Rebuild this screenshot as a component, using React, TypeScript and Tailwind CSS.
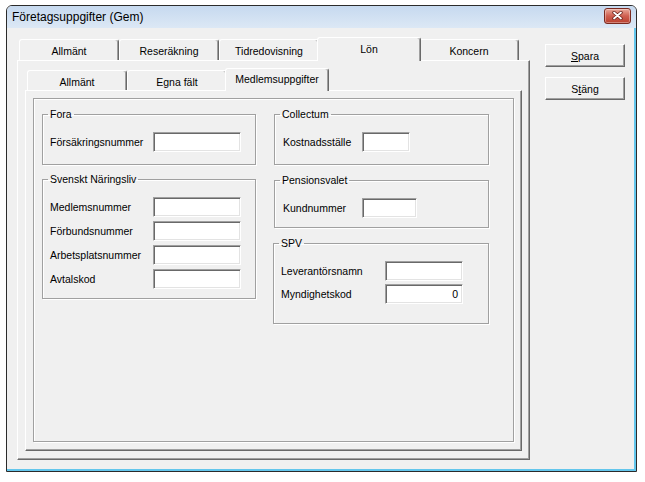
import clsx from "clsx"

function CloseButton() {
  return (
    <div className="mb-[3px] flex h-[16px] w-[27px] items-center justify-center rounded-[3px] border border-[#7a2a20] bg-linear-to-b from-[#e8a99b] via-[#cf5f50] to-[#b9402f] shadow-[inset_0_0_0_1px_rgba(255,255,255,0.35)]">
      <svg width="11" height="9" viewBox="0 0 11 9">
        <path d="M2 1.5 L9 7.5 M9 1.5 L2 7.5" stroke="#6b231a" strokeWidth="3.4" strokeLinecap="round" />
        <path d="M2 1.5 L9 7.5 M9 1.5 L2 7.5" stroke="#ffffff" strokeWidth="1.8" strokeLinecap="round" />
      </svg>
    </div>
  )
}

function Tab({ label, selected, small }: { label: string; selected?: boolean; small?: boolean }) {
  if (selected) {
    return (
      <div
        className={clsx(
          "relative z-10 -mx-[2px] -mb-[1px] flex w-[104px] items-center justify-center rounded-t-[3px] border border-b-0 border-t-white border-l-white border-r-[#696969] bg-[#f0f0f0] pb-[2px] shadow-[inset_-1px_0_0_#a0a0a0]",
          small ? "h-[23px]" : "h-[24px]"
        )}
      >
        {label}
      </div>
    )
  }
  return (
    <div
      className={clsx(
        "flex w-[100px] items-center justify-center rounded-t-[3px] border border-b-0 border-t-white border-l-white border-r-[#696969] bg-[#f0f0f0] pt-[2px] shadow-[inset_-1px_0_0_#a0a0a0]",
        small ? "h-[20px]" : "h-[21px]"
      )}
    >
      {label}
    </div>
  )
}

function Group({ title, children, className }: { title: string; children: React.ReactNode; className?: string }) {
  return (
    <fieldset className={clsx("border border-[#a0a0a0] p-0 shadow-[1px_1px_0_#fff,inset_1px_1px_0_#fff]", className)}>
      <legend className="ml-[5px] px-[2px] leading-[12px]">{title}</legend>
      {children}
    </fieldset>
  )
}

function Field({
  label,
  labelW,
  inputW,
  value,
}: {
  label: string
  labelW: string
  inputW: string
  value?: string
}) {
  return (
    <div className="flex items-center">
      <span className={clsx("shrink-0", labelW)}>{label}</span>
      <div
        className={clsx(
          "flex h-[20px] items-center justify-end border border-t-[#a0a0a0] border-l-[#a0a0a0] border-r-white border-b-white bg-white pr-[4px] shadow-[inset_1px_1px_0_#696969,inset_-1px_-1px_0_#e3e3e3]",
          inputW
        )}
      >
        {value}
      </div>
    </div>
  )
}

export default function App() {
  return (
    <div className="h-[482px] w-[645px] bg-white pl-[6px] pt-[5px] font-['Liberation_Sans',Arial,sans-serif] text-[10.5px] leading-[12px] text-black">
      <div className="flex h-[467px] w-[631px] flex-col overflow-hidden rounded-t-[6px] border border-[#2b2b2b] bg-[#f0f0f0]">
        {/* Title bar */}
        <div className="flex h-[22px] shrink-0 items-center justify-between bg-linear-to-b from-[#c6d9ef] to-[#dce8f5] pl-[5px] pr-[5px]">
          <span className="text-[12px]">Företagsuppgifter (Gem)</span>
          <CloseButton />
        </div>

        {/* Client */}
        <div className="flex flex-1 pl-[10px] pt-[9px] shadow-[inset_-2px_-2px_0_#63c6ec]">
          {/* Outer tabs */}
          <div className="flex w-[513px] flex-col">
            <div className="flex h-[23px] items-end pl-[2px]">
              <Tab label="Allmänt" />
              <Tab label="Reseräkning" />
              <Tab label="Tidredovisning" />
              <Tab label="Lön" selected />
              <Tab label="Koncern" />
            </div>
            <div className="h-[400px] border border-t-white border-l-white border-r-[#696969] border-b-[#696969] px-[7px] pt-[7px] shadow-[inset_-1px_-1px_0_#a0a0a0]">
              {/* Inner tabs */}
              <div className="flex h-[22px] items-end pl-[2px]">
                <Tab label="Allmänt" small />
                <Tab label="Egna fält" small />
                <Tab label="Medlemsuppgifter" selected small />
              </div>
              <div className="h-[361px] border border-t-white border-l-white border-r-[#696969] border-b-[#696969] p-[7px] shadow-[inset_-1px_-1px_0_#a0a0a0]">
                <div className="flex h-[344px] gap-[18px] border border-[#a0a0a0] pl-[8px] pt-[9px] shadow-[1px_1px_0_#fff,inset_1px_1px_0_#fff]">
                  {/* Left column */}
                  <div className="flex w-[214px] flex-col gap-[8px]">
                    <Group title="Fora">
                      <div className="pb-[12px] pl-[7px] pt-[12px]">
                        <Field label="Försäkringsnummer" labelW="w-[103px]" inputW="w-[88px]" />
                      </div>
                    </Group>
                    <Group title="Svenskt Näringsliv">
                      <div className="flex flex-col gap-[4px] pb-[9px] pl-[7px] pt-[12px]">
                        <Field label="Medlemsnummer" labelW="w-[103px]" inputW="w-[88px]" />
                        <Field label="Förbundsnummer" labelW="w-[103px]" inputW="w-[88px]" />
                        <Field label="Arbetsplatsnummer" labelW="w-[103px]" inputW="w-[88px]" />
                        <Field label="Avtalskod" labelW="w-[103px]" inputW="w-[88px]" />
                      </div>
                    </Group>
                  </div>

                  {/* Right column */}
                  <div className="flex w-[215px] flex-col gap-[9px]">
                    <Group title="Collectum">
                      <div className="pb-[12px] pl-[8px] pt-[12px]">
                        <Field label="Kostnadsställe" labelW="w-[79px]" inputW="w-[48px]" />
                      </div>
                    </Group>
                    <Group title="Pensionsvalet">
                      <div className="pb-[9px] pl-[8px] pt-[12px]">
                        <Field label="Kundnummer" labelW="w-[79px]" inputW="w-[55px]" />
                      </div>
                    </Group>
                    <Group title="SPV" className="-ml-[1px]">
                      <div className="flex flex-col gap-[3px] pb-[19px] pl-[7px] pt-[12px]">
                        <Field label="Leverantörsnamn" labelW="w-[104px]" inputW="w-[78px]" />
                        <Field label="Myndighetskod" labelW="w-[104px]" inputW="w-[78px]" value="0" />
                      </div>
                    </Group>
                  </div>
                </div>
              </div>
            </div>
          </div>

          {/* Buttons */}
          <div className="ml-[15px] mt-[7px] flex flex-col gap-[10px]">
            <button className="h-[23px] w-[80px] border border-t-white border-l-white border-r-[#696969] border-b-[#696969] bg-[#f0f0f0] shadow-[inset_-1px_-1px_0_#a0a0a0]">
              <span className="underline underline-offset-[1px]">S</span>para
            </button>
            <button className="h-[23px] w-[80px] border border-t-white border-l-white border-r-[#696969] border-b-[#696969] bg-[#f0f0f0] shadow-[inset_-1px_-1px_0_#a0a0a0]">
              S<span className="underline underline-offset-[1px]">t</span>äng
            </button>
          </div>
        </div>
      </div>
    </div>
  )
}
